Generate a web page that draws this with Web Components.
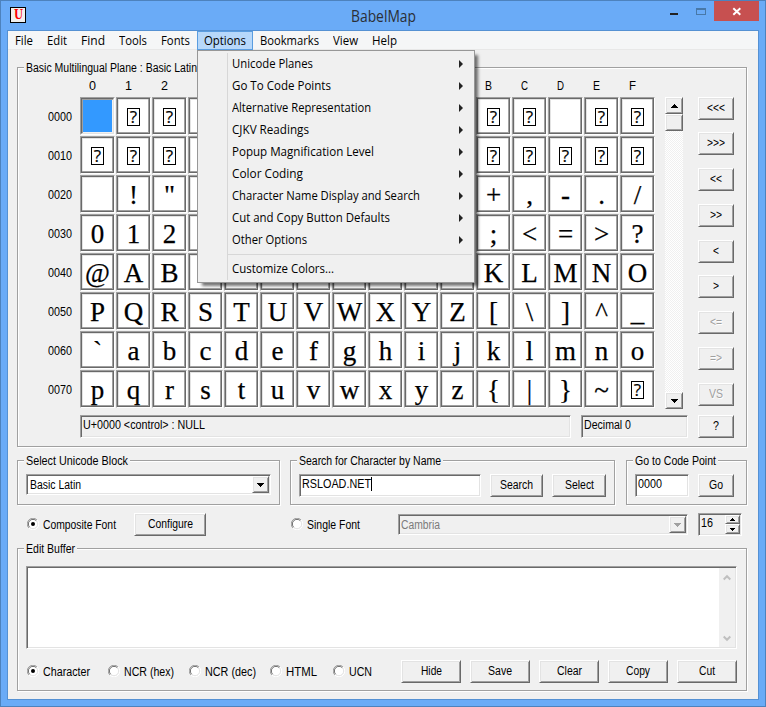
<!DOCTYPE html>
<html lang="en">
<head>
<meta charset="utf-8">
<title>BabelMap</title>
<style>
html,body{margin:0;padding:0}
body{width:766px;height:707px;overflow:hidden;font:12px/14px "Liberation Sans",Arial,sans-serif;color:#000}
</style>
</head>
<body>
<babel-window></babel-window>
<script>
const make = (name, html, init) => {
  const t = document.createElement('template');
  t.innerHTML = html;
  customElements.define(name, class extends HTMLElement {
    constructor() {
      super();
      this.attachShadow({mode: 'open'}).append(t.content.cloneNode(true));
    }
    connectedCallback() { if (init && !this.ready) { this.ready = true; init(this, this.shadowRoot); } }
  });
};
const SUNK = 'border:1px solid;border-color:#a0a0a0 #fff #fff #a0a0a0;box-shadow:inset 1px 1px #696969,inset -1px -1px #e3e3e3;';
const RAISED = 'border:1px solid;border-color:#fff #696969 #696969 #fff;box-shadow:inset 1px 1px #e3e3e3,inset -1px -1px #a0a0a0;background:#f0f0f0;';
const T = (s, w) => `<ui-text w="${w}">${s}</ui-text>`;

/* Push button */
make('ui-button', `<style>
:host{display:flex;box-sizing:border-box;height:23px;padding-bottom:2px;align-items:center;justify-content:center;${RAISED}}
:host([disabled]){color:#a0a0a0;text-shadow:1px 1px #fff}
</style><slot></slot>`);

/* Sunken text field */
make('ui-field', `<style>
:host{display:flex;box-sizing:border-box;height:23px;padding:2px 0 0 2px;align-items:flex-start;background:#fff;${SUNK}}
:host([flat]){background:#f0f0f0}
i{width:1px;height:14px;background:#000;display:none}
:host([caret]) i{display:block}
</style><slot></slot><i></i>`);

/* Arrow button of a scroll bar, combo box or spinner */
make('ui-arrow', `<style>
:host{display:flex;box-sizing:border-box;width:17px;height:17px;align-items:center;justify-content:center;${RAISED}}
svg{display:block;fill:#000}
:host([dir=up]) svg{transform:scaleY(-1)}
:host([disabled]) svg{fill:#a0a0a0}
:host([small]) svg{width:5px;height:3px}
</style><svg width="7" height="4" viewBox="0 0 7 4" shape-rendering="crispEdges"><path d="M0 0h7v1h-1v1h-1v1h-1v1h-1v-1h-1v-1h-1v-1h-1z"/></svg>`);

make('ui-combo', `<style>
:host{display:flex;box-sizing:border-box;height:21px;padding:1px 1px 1px 3px;align-items:center;justify-content:space-between;background:#fff;${SUNK}}
:host([disabled]){background:#f0f0f0;color:#7b7b7b;padding-left:2px}
</style><slot></slot><ui-arrow></ui-arrow>`, (h, r) => {
  if (h.hasAttribute('disabled')) r.querySelector('ui-arrow').setAttribute('disabled', '');
});

make('ui-radio', `<style>
:host{display:flex;height:14px;align-items:center;gap:4px}
svg{display:block;margin-top:-2px} circle.dot{display:none}
:host([checked]) circle.dot{display:block}
</style><svg width="12" height="12" viewBox="0 0 12 12"><circle cx="6" cy="6" r="5" fill="#fff"/>
<g fill="none"><path d="M1.9 10.1A5.5 5.5 0 1 1 10.1 1.9" stroke="#a0a0a0"/><path d="M2.7 9.3A4.6 4.6 0 1 1 9.3 2.7" stroke="#696969"/>
<path d="M10.1 1.9A5.5 5.5 0 1 1 1.9 10.1" stroke="#fff"/><path d="M9.3 2.7A4.6 4.6 0 1 1 2.7 9.3" stroke="#e3e3e3"/></g>
<circle class="dot" cx="6" cy="6" r="2" fill="#000"/></svg><slot></slot>`);

/* Etched frame with a caption that interrupts its top edge */
make('ui-group', `<style>
:host{display:block;box-sizing:border-box;border:1px solid #a0a0a0;box-shadow:1px 1px #fff,inset 1px 1px #fff}
header{display:block;width:max-content;height:14px;margin:-7px 0 0 6px;padding:0 2px;background:#f0f0f0}
</style><header><slot name="caption"></slot></header><slot></slot>`);

/* One character of the map */
make('map-cell', `<style>
:host{display:flex;box-sizing:border-box;width:35px;height:38px;padding:1px;border:1px solid;border-color:#a0a0a0 #fff #fff #a0a0a0}
div{flex:1;display:flex;box-sizing:border-box;justify-content:center;background:#fff;border:1px solid #696969;margin:-1px;
 box-shadow:inset -1px -1px #a0a0a0,inset 1px 1px #e3e3e3;font:27px/36px "Liberation Serif","Times New Roman",serif;height:36px;-webkit-text-stroke:.25px #000}
:host([picked]) div{background:#39f;border-color:#696969 #e3e3e3 #e3e3e3 #696969;box-shadow:inset 1px 1px #a0a0a0,inset 0 0 0 1px #f0f0f0}
b{display:none;box-sizing:border-box;width:13px;height:18px;margin:9px 0 0 0;border:1px solid #000;font:17px/16px "Open Sans","Noto Sans",sans-serif;justify-content:center;-webkit-text-stroke:.2px #000}
:host([missing]) b{display:flex}
</style><div><slot></slot><b></b></div>`, (h, r) => {
  if (h.hasAttribute('missing')) r.querySelector('b').textContent = '?';
});

/* The cells and column heads that the open menu covers stay blank */
make('code-grid', `<style>
:host{display:grid;grid-template-columns:44px repeat(16,35px);column-gap:1px;row-gap:1px;grid-template-rows:21px repeat(8,38px)}
.h{text-align:center;padding:4px 11px 0 0;box-sizing:border-box}
.r{display:flex;align-items:center;padding:2px 0 0 13px}
</style>`, (h, r) => {
  let s = '<span></span>';
  const covered = x => x > 2 && x < 11;
  [...'0123456789ABCDEF'].forEach((c, x) => s += `<span class="h">${covered(x) ? '' : T(c, 7)}</span>`);
  for (let y = 0; y < 8; y++) {
    s += `<span class="r">${T('00' + y + '0', 24)}</span>`;
    for (let x = 0; x < 16; x++) {
      const n = y * 16 + x;
      if (n === 0) s += '<map-cell picked></map-cell>';
      else if (n === 13 || n === 32 || (y < 5 && covered(x))) s += '<map-cell></map-cell>';
      else if (n < 32 || n === 127) s += '<map-cell missing></map-cell>';
      else s += `<map-cell>&#${n};</map-cell>`;
    }
  }
  r.innerHTML += s;
});

make('map-scroll', `<style>
:host{display:flex;flex-direction:column;width:18px;height:312px;
 background:repeating-conic-gradient(#fff 0 25%,#f0f0f0 0 50%) 0 0/2px 2px}
ui-arrow{width:18px}
.thumb{box-sizing:border-box;height:17px;${RAISED}} .sp{flex:1}
</style><ui-arrow dir="up"></ui-arrow><div class="thumb"></div><div class="sp"></div><ui-arrow></ui-arrow>`);

make('edit-area', `<style>
:host{display:flex;box-sizing:border-box;height:83px;padding:1px;background:#fff;justify-content:flex-end;${SUNK}}
div{width:16px;display:flex;flex-direction:column;justify-content:space-between;align-items:center;background:#f0f0f0;padding:6px 0 5px;box-sizing:border-box}
svg{fill:none;stroke:#bfbfbf;stroke-width:2}
</style><div><svg width="8" height="7"><path d="M.7 5.5L4 2.2l3.3 3.3"/></svg><svg width="8" height="7"><path d="M.7 1.5L4 4.8l3.3-3.3"/></svg></div>`);

make('menu-row', `<style>
:host{display:flex;height:22px;align-items:center;justify-content:space-between;padding:0 11px 0 34px}
svg{display:block;margin-top:-1px} :host([plain]) svg{display:none}
</style><slot></slot><svg width="4" height="8"><path d="M0 0l4 4-4 4z" fill="#222"/></svg>`);

make('options-menu', `<style>
:host{position:absolute;left:0;top:19px;z-index:5;box-sizing:border-box;width:278px;height:233px;padding:2px 0;border:1px solid #979797;
 background:linear-gradient(#d7d7d7,#d7d7d7) 29px 2px/1px 227px no-repeat,#f0f0f0;box-shadow:4px 4px 3px -1px rgba(0,0,0,.55)}
hr{height:1px;border:0;background:#d7d7d7;margin:3px 2px 3px 30px}
</style>
<menu-row>${T('Unicode Planes', 81)}</menu-row>
<menu-row>${T('Go To Code Points', 99)}</menu-row>
<menu-row>${T('Alternative Representation', 139)}</menu-row>
<menu-row>${T('CJKV Readings', 77)}</menu-row>
<menu-row>${T('Popup Magnification Level', 142)}</menu-row>
<menu-row>${T('Color Coding', 71)}</menu-row>
<menu-row>${T('Character Name Display and Search', 188)}</menu-row>
<menu-row>${T('Cut and Copy Button Defaults', 158)}</menu-row>
<menu-row>${T('Other Options', 75)}</menu-row>
<hr>
<menu-row plain>${T('Customize Colors...', 102)}</menu-row>`);

make('menu-bar', `<style>
:host{display:flex;height:18px;background:#f5f6f7;border-bottom:1px solid #e8e8e8;font:12px/18px "Open Sans","Noto Sans",sans-serif}
span{box-sizing:border-box;height:18px;padding:1px 7px 0;position:relative;display:block}
.on{height:19px;background:#b7d8fa;box-shadow:inset 0 0 0 1px #5a9de0}
</style>
<span>${T('File', 18)}</span><span>${T('Edit', 20)}</span><span>${T('Find', 24)}</span><span>${T('Tools', 28)}</span><span>${T('Fonts', 29)}</span><span class="on">${T('Options', 42)}<options-menu></options-menu></span><span>${T('Bookmarks', 59)}</span><span>${T('View', 25)}</span><span>${T('Help', 25)}</span>`);

make('title-bar', `<style>
:host{display:grid;grid-template-columns:250px 1fr 250px;height:30px;font:16px/20px "Open Sans","Noto Sans",sans-serif;color:#2b2f36}
.icon{width:14px;height:14px;margin:6px 0 0 9px;border:1px solid #000;background:#f0f0f0;display:block;
 color:#f00;font:bold 12.5px/14px "DejaVu Serif Condensed","DejaVu Serif",serif;text-align:center}
.t{text-align:center;padding-top:5px}
.c{display:flex;justify-content:flex-end;padding-right:6px}
.x{width:45px;height:20px;background:#c75050;display:block}
.m{display:block;margin-right:8px}
</style>
<div class="icon">${T('U', 9)}</div>
<div class="t">${T('BabelMap', 65)}</div>
<div class="c"><svg class="m" width="37" height="20"><path d="M1 12h8v2H1z" fill="#222"/><g shape-rendering="crispEdges"><path d="M27.5 7.5h9v6h-9z" fill="none" stroke="#4878a8"/><path d="M27 7h10v2H27z" fill="#4878a8"/></g></svg>
<svg class="x" width="45" height="20"><path d="M19.3 7.3l7 6.4M26.3 7.3l-7 6.4" stroke="#fff" stroke-width="2"/></svg></div>`);

make('side-buttons', `<style>
:host{display:flex;flex-direction:column;width:36px}
ui-button{margin-top:13px}
ui-button:nth-of-type(1){margin-top:0}
ui-button:nth-of-type(2),ui-button:nth-of-type(6){margin-top:12px}
ui-button:nth-of-type(10){margin-top:9px}
</style>
<ui-button>${T('&lt;&lt;&lt;', 18)}</ui-button><ui-button>${T('&gt;&gt;&gt;', 18)}</ui-button>
<ui-button>${T('&lt;&lt;', 12)}</ui-button><ui-button>${T('&gt;&gt;', 12)}</ui-button>
<ui-button>${T('&lt;', 6)}</ui-button><ui-button>${T('&gt;', 6)}</ui-button>
<ui-button disabled>${T('&lt;=', 12)}</ui-button><ui-button disabled>${T('=&gt;', 12)}</ui-button>
<ui-button disabled>${T('VS', 14)}</ui-button><ui-button>${T('?', 6)}</ui-button>`);

make('babel-window', `<style>
:host{display:flex;flex-direction:column;box-sizing:border-box;width:766px;height:707px;border:1px solid #4d82bd;background:#6aabf7}
main{box-sizing:border-box;margin:-1px 6px 0;height:670px;border:1px solid #5591d3;background:#f0f0f0;display:flex;flex-direction:column}
.row{display:flex}
.body{padding:17px 11px 0 9px}
.map{height:380px;margin-bottom:13px}
.top{padding:0 12px 0 17px;justify-content:space-between}
.left{display:flex;flex-direction:column}
.g{display:flex}
.g map-scroll{margin:22px 0 0 10px}
.st{padding-left:45px;gap:10px;margin-top:6px}
side-buttons{margin-top:22px}
.three{gap:10px;height:45px;margin-bottom:8px}
.in{padding:6px 8px 0;gap:9px}
.font{align-items:center;height:23px;padding:0 5px 0 10px}
.edit{height:143px;margin-top:12px}
edit-area{margin:10px 9px 11px 8px}
.modes{padding:0 9px 0 9px}
.modes ui-radio{height:24px}
.modes .row{gap:9px;margin-left:auto}
.spin{box-sizing:border-box;width:44px;height:23px;margin-left:10px;padding:1px 1px 1px 2px;display:flex;justify-content:space-between;${SUNK}}
.spin>ui-text{margin-top:1px}
.spin ui-arrow{width:15px;height:10px}
.spin ui-arrow:first-child{height:9px}
</style>
<title-bar></title-bar>
<main><menu-bar></menu-bar>
<div class="body">
<ui-group class="map"><span slot="caption">${T('Basic Multilingual Plane : Basic Latin', 171)}</span>
 <div class="row top"><div class="left"><div class="g"><code-grid></code-grid><map-scroll></map-scroll></div>
  <div class="row st"><ui-field flat style="width:491px">${T('U+0000 &lt;control&gt; : NULL', 122)}</ui-field><ui-field flat style="width:107px">${T('Decimal 0', 47)}</ui-field></div></div>
 <side-buttons></side-buttons></div>
</ui-group>
<div class="row three">
 <ui-group style="width:263px"><span slot="caption">${T('Select Unicode Block', 102)}</span><div class="in"><ui-combo>${T('Basic Latin', 51)}</ui-combo></div></ui-group>
 <ui-group style="width:325px"><span slot="caption">${T('Search for Character by Name', 142)}</span><div class="row in"><ui-field caret style="width:183px">${T('RSLOAD.NET', 69)}</ui-field><ui-button style="width:54px">${T('Search', 33)}</ui-button><ui-button style="width:54px">${T('Select', 29)}</ui-button></div></ui-group>
 <ui-group style="width:121px;margin-left:1px"><span slot="caption">${T('Go to Code Point', 81)}</span><div class="row in"><ui-field style="width:54px">${T('0000', 24)}</ui-field><ui-button style="width:36px">${T('Go', 14)}</ui-button></div></ui-group>
</div>
<div class="row font"><ui-radio checked>${T('Composite Font', 73)}</ui-radio><ui-button style="width:72px;margin-left:18px">${T('Configure', 45)}</ui-button>
 <ui-radio style="margin-left:85px">${T('Single Font', 53)}</ui-radio><ui-combo disabled style="width:290px;margin-left:auto">${T('Cambria', 39)}</ui-combo>
 <div class="spin">${T('16', 12)}<div><ui-arrow small dir="up"></ui-arrow><ui-arrow small></ui-arrow></div></div></div>
<ui-group class="edit"><span slot="caption">${T('Edit Buffer', 49)}</span><edit-area></edit-area>
 <div class="row modes"><ui-radio checked>${T('Character', 47)}</ui-radio><ui-radio style="margin-left:18px">${T('NCR (hex)', 50)}</ui-radio><ui-radio style="margin-left:15px">${T('NCR (dec)', 51)}</ui-radio><ui-radio style="margin-left:14px">${T('HTML', 31)}</ui-radio><ui-radio style="margin-left:16px">${T('UCN', 23)}</ui-radio>
 <div class="row">${['Hide:21','Save:24','Clear:25','Copy:24','Cut:16'].map(s => { const [a, b] = s.split(':'); return `<ui-button style="width:60px">${T(a, b)}</ui-button>`; }).join('')}</div></div>
</ui-group>
</div></main>`);

/* Text set to a given advance width; defined last so inherited fonts are in place when it measures */
make('ui-text', `<style>
:host{display:inline-block;white-space:nowrap;vertical-align:top;text-align:left}
span{display:inline-block;transform-origin:0 50%;vertical-align:top}
</style><span><slot></slot></span>`, (h, r) => {
  const w = +h.getAttribute('w'), s = r.querySelector('span');
  const m = s.getBoundingClientRect().width;
  h.style.width = w + 'px';
  if (m) s.style.transform = `scaleX(${w / m})`;
});
</script>
</body>
</html>
